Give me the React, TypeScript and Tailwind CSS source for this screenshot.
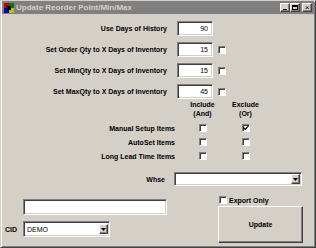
import React from 'react';

const sunken =
  'bg-white border border-t-[#808080] border-l-[#808080] border-b-white border-r-white shadow-[inset_1px_1px_0_#404040,inset_-1px_-1px_0_#d4d0c8]';
const raised =
  'bg-[#d4d0c8] border border-t-white border-l-white border-b-[#404040] border-r-[#404040] shadow-[inset_-1px_-1px_0_#808080]';

function Check({ checked = false }: { checked?: boolean }) {
  return (
    <div className="w-[8px] h-[8px] bg-white border border-t-[#808080] border-l-[#808080] border-b-white border-r-white shadow-[inset_1px_1px_0_#404040] flex items-center justify-center shrink-0">
      {checked && (
        <svg width="6" height="6" viewBox="0 0 6 6">
          <path d="M0.5 2.5 L2.2 4.3 L5.5 0.8" stroke="#000" strokeWidth="1.2" fill="none" />
        </svg>
      )}
    </div>
  );
}

function NumBox({ value }: { value: string }) {
  return (
    <div className={`${sunken} w-[36px] h-[15px] ml-[10px] flex items-center justify-end pr-[4px] text-[7px] font-normal`}>
      {value}
    </div>
  );
}

function Combo({ width, text = '' }: { width: string; text?: string }) {
  return (
    <div className={`${sunken} ${width} flex items-center justify-between pl-[3px] pr-[1px] text-[7px] font-normal`}>
      <span>{text}</span>
      <div className={`${raised} w-[9px] h-[10px] flex items-center justify-center`}>
        <svg width="5" height="3" viewBox="0 0 5 3">
          <path d="M0 0 H5 L2.5 3 Z" fill="#000" />
        </svg>
      </div>
    </div>
  );
}

const ROWS = [
  { label: 'Use Days of History', value: '90', check: false },
  { label: 'Set Order Qty to X Days of Inventory', value: '15', check: true },
  { label: 'Set MinQty to X Days of Inventory', value: '15', check: true },
  { label: 'Set MaxQty to X Days of Inventory', value: '45', check: true },
];

const ITEMS = [
  { label: 'Manual Setup Items', include: false, exclude: true },
  { label: 'AutoSet Items', include: false, exclude: false },
  { label: 'Long Lead Time Items', include: false, exclude: false },
];

export default function App() {
  return (
    <div className="w-[316px] h-[248px] bg-[#d4d0c8] font-['Liberation_Sans',Arial,sans-serif] text-black">
      <div className="w-[316px] h-[248px] border border-t-[#d4d0c8] border-l-[#d4d0c8] border-b-[#404040] border-r-[#404040] shadow-[inset_1px_1px_0_#fff,inset_-1px_-1px_0_#808080] flex flex-col">
        {/* Title bar */}
        <div className="h-[13px] bg-[#808080] flex items-center px-[2px] mx-[1px]">
          <svg width="10" height="10" viewBox="0 0 10 10" className="shrink-0">
            <rect x="0" y="0" width="5" height="5" fill="#c00000" />
            <rect x="5" y="0" width="5" height="5" fill="#008000" />
            <rect x="0" y="5" width="5" height="5" fill="#0000c0" />
            <rect x="5" y="5" width="5" height="5" fill="#c0c000" />
            <rect x="3" y="3" width="4" height="4" fill="#000" />
          </svg>
          <span className="ml-[2px] text-[8px] font-bold text-[#d4d0c8] leading-none">Update Reorder Point/Min/Max</span>
          <div className="ml-auto flex items-center">
            <div className={`${raised} w-[10px] h-[9px] flex items-end justify-center pb-[1px]`}>
              <div className="w-[4px] h-[1.5px] bg-black" />
            </div>
            <div className={`${raised} w-[10px] h-[9px] flex items-center justify-center`}>
              <div className="w-[6px] h-[5px] border border-black border-t-2" />
            </div>
            <div className={`${raised} w-[10px] h-[9px] ml-[2px] flex items-center justify-center text-[8px] leading-none`}>
              ×
            </div>
          </div>
        </div>

        {/* Form */}
        <div className="flex flex-col pt-[7px] text-[7px] font-bold leading-[9px]">
          <div className="flex flex-col gap-[6px]">
            {ROWS.map((r) => (
              <div key={r.label} className="flex items-center h-[15px]">
                <div className="w-[166px] text-right">{r.label}</div>
                <NumBox value={r.value} />
                {r.check && (
                  <div className="ml-[5px]">
                    <Check />
                  </div>
                )}
              </div>
            ))}
          </div>

          <div className="flex mt-[1px]">
            <div className="w-[174px]" />
            <div className="w-[55px] text-center">
              Include
              <br />
              (And)
            </div>
            <div className="w-[31px] text-center">
              Exclude
              <br />
              (Or)
            </div>
          </div>

          <div className="flex flex-col mt-[3px]">
            {ITEMS.map((it) => (
              <div key={it.label} className="flex items-center h-[14px]">
                <div className="w-[174px] text-right">{it.label}</div>
                <div className="w-[55px] flex justify-center">
                  <Check checked={it.include} />
                </div>
                <div className="w-[31px] flex justify-center">
                  <Check checked={it.exclude} />
                </div>
              </div>
            ))}
          </div>

          <div className="flex items-center mt-[9px] h-[14px]">
            <div className="w-[164px] text-right">Whse</div>
            <div className="ml-[9px]">
              <Combo width="w-[128px] h-[14px]" />
            </div>
          </div>

          <div className="flex mt-[10px] ml-[4px]">
            <div className="w-[162px] flex flex-col pt-[3px]">
              <div className={`${sunken} ml-[18px] w-[144px] h-[16px]`} />
              <div className="flex items-center mt-[6px]">
                <div className="w-[18px]">CID</div>
                <Combo width="w-[87px] h-[16px]" text="DEMO" />
              </div>
            </div>
            <div className="ml-[51px] flex flex-col">
              <div className="flex items-center h-[8px] ml-[1px]">
                <Check />
                <span className="ml-[2px]">Export Only</span>
              </div>
              <button className={`${raised} mt-[2px] w-[85px] h-[37px] text-[7px] font-bold`}>Update</button>
            </div>
          </div>
        </div>
      </div>
    </div>
  );
}
